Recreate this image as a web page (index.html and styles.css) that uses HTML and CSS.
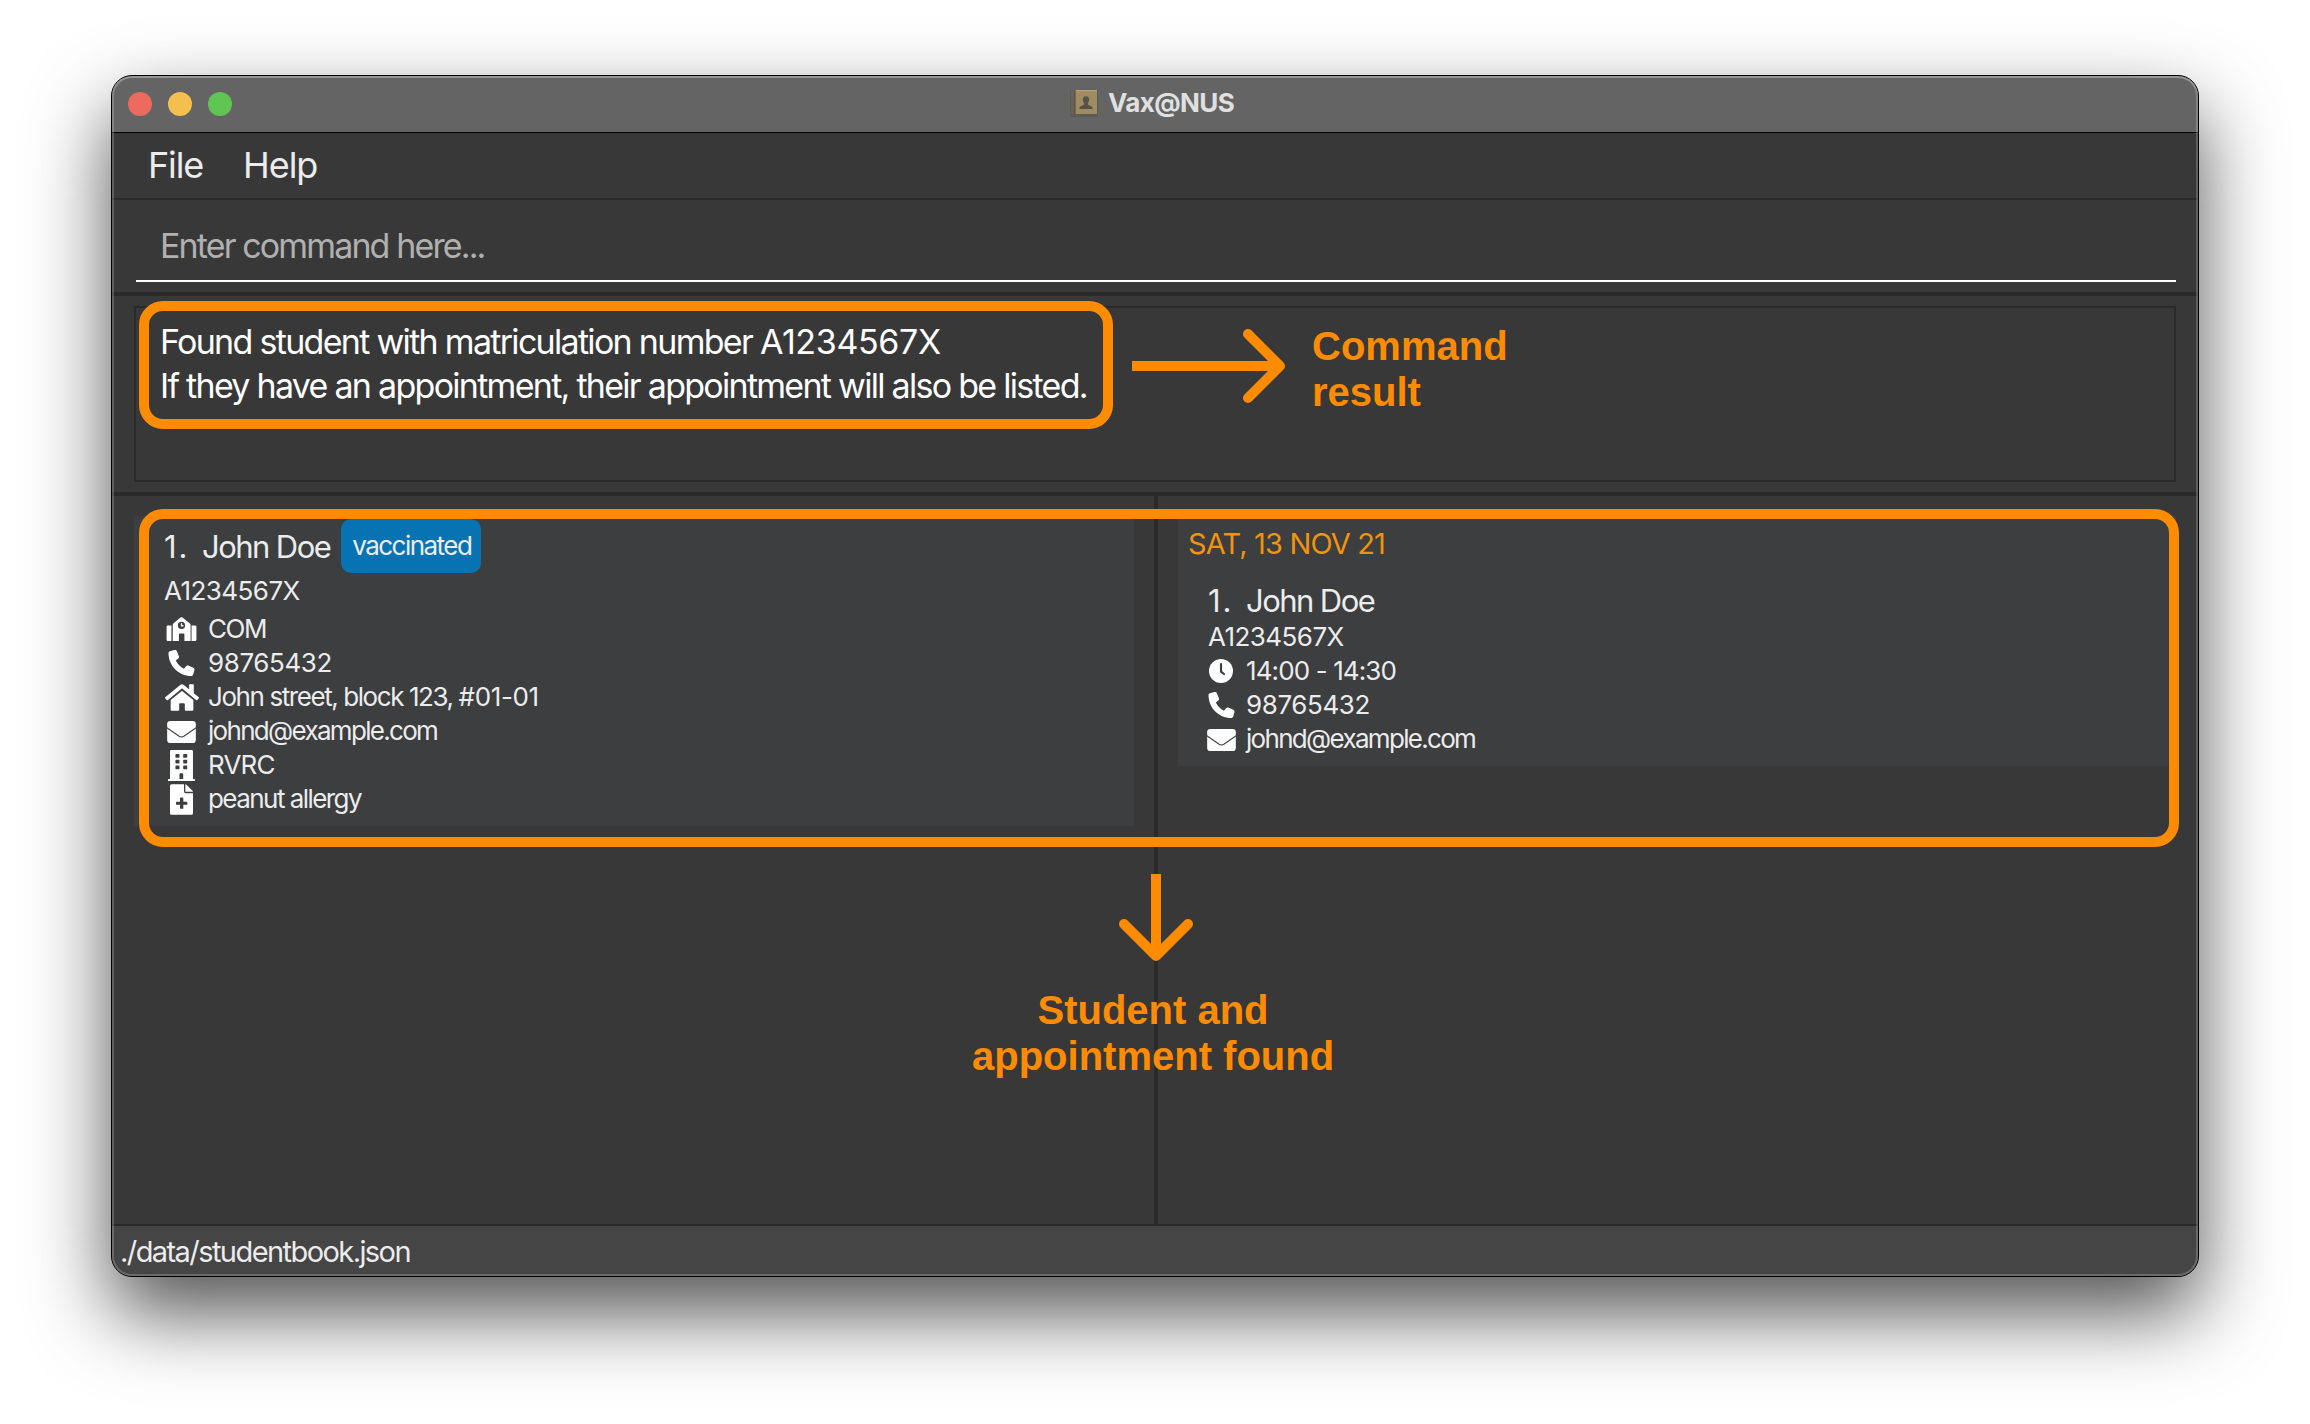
FILE: index.html
```html
<!DOCTYPE html>
<html lang="en">
<head>
<meta charset="utf-8">
<title>Vax@NUS</title>
<link rel="stylesheet" href="styles.css">
</head>
<body>
<svg class="sprite" aria-hidden="true">
  <symbol id="i-phone" viewBox="0 0 512 512"><path d="M164.900 24.600c-7.700-18.600-28-28.500-47.400-23.200l-88 24C12.100 30.200 0 46 0 64C0 311.400 200.600 512 448 512c18 0 33.800-12.100 38.600-29.500l24-88c5.300-19.400-4.600-39.700-23.200-47.400l-96-40c-16.300-6.800-35.200-2.100-46.300 11.600L304.700 368C234.300 334.700 177.300 277.700 144 207.300L193.300 167c13.700-11.200 18.400-30 11.600-46.300l-40-96z"/></symbol>
  <symbol id="i-home" viewBox="0 32 576 448"><path d="M280.370 148.260L96 300.110V464a16 16 0 0 0 16 16l112.060-.29a16 16 0 0 0 15.920-16V368a16 16 0 0 1 16-16h64a16 16 0 0 1 16 16v95.640a16 16 0 0 0 16 16.050L464 480a16 16 0 0 0 16-16V300L295.670 148.260a12.190 12.190 0 0 0-15.300 0zM571.600 251.470L488 182.560V44.050a12 12 0 0 0-12-12h-56a12 12 0 0 0-12 12v72.610L318.470 43a48 48 0 0 0-61 0L4.340 251.470a12 12 0 0 0-1.600 16.900l25.500 31A12 12 0 0 0 45.150 301l235.220-193.740a12.190 12.190 0 0 1 15.300 0L530.900 301a12 12 0 0 0 16.900-1.600l25.500-31a12 12 0 0 0-1.700-16.930z"/></symbol>
  <symbol id="i-mail" viewBox="0 0 86 66"><rect width="86" height="66" rx="10"/><path class="cut-line" d="M-1 20L36 46q7 4 14 0L87 20"/></symbol>
  <symbol id="i-school" viewBox="0 0 92 74"><path fill-rule="evenodd" d="M19 74V24q0-3 2.500-5L43 1.500q3-2 6 0L71 19q3 2 3 5V74H55V54q0-3-3-3H41q-3 0-3 3V74z"/><path d="M4 26H15V74H4q-4 0-4-4V30q0-4 4-4zM77 26H88q4 0 4 4V70q0 4-4 4H77z"/><circle class="cut" cx="46" cy="26" r="11"/><path class="hand" d="M46 19.500V27H52"/></symbol>
  <symbol id="i-building" viewBox="0 0 80 92"><path fill-rule="evenodd" d="M9 0H70q4 0 4 4V86H78q2 0 2 2V92H0V88q0-2 2-2H6V4q0-4 3-4zM24 12h8q2 0 2 2v7q0 2-2 2h-8q-2 0-2-2v-7q0-2 2-2zM47 12h8q2 0 2 2v7q0 2-2 2h-8q-2 0-2-2v-7q0-2 2-2zM24 29h8q2 0 2 2v7q0 2-2 2h-8q-2 0-2-2v-7q0-2 2-2zM47 29h8q2 0 2 2v7q0 2-2 2h-8q-2 0-2-2v-7q0-2 2-2zM24 46h8q2 0 2 2v7q0 2-2 2h-8q-2 0-2-2v-7q0-2 2-2zM47 46h8q2 0 2 2v7q0 2-2 2h-8q-2 0-2-2v-7q0-2 2-2zM36 69h7q2 0 2 2V86H34V71q0-2 2-2z"/></symbol>
  <symbol id="i-file" viewBox="0 0 69 92"><path fill-rule="evenodd" d="M5 0H42V22q0 5 5 5H69V87q0 5-5 5H5q-5 0-5-5V5q0-5 5-5zM30 42q0-2 2-2h6q2 0 2 2V53H50q2 0 2 2v5q0 2-2 2H40V72q0 2-2 2H32q-2 0-2-2V62H20q-2 0-2-2V55q0-2 2-2H30z"/><path d="M46 0q2 0 3.500 1.500L67.500 19.500Q69 21 69 23H46z"/></symbol>
  <symbol id="i-clock" viewBox="0 0 72 72"><circle cx="36" cy="36" r="36"/><path class="cut-hand" d="M36 15V38L45 45"/></symbol>
</svg>

<main class="window">
  <header class="titlebar">
    <div class="lights"><i class="light red"></i><i class="light yellow"></i><i class="light green"></i></div>
    <div class="caption">
      <svg class="book" viewBox="0 0 28 28"><rect x="0" y="1" width="28" height="27" rx="1.500" fill="#5c5a55"/><rect x="1" y="1" width="26" height="24.500" rx="1" fill="#6d6157"/><rect x="5.500" y="1" width="21.500" height="24" fill="#a08c61"/><rect x="5.500" y="1" width="21.500" height="1.200" fill="#b3a27e"/><path d="M4.800 1V25.500" stroke="#565049" stroke-width="1"/><path d="M16 7.300c2 0 3.200 1.400 3.200 3.400 0 1.500-.7 2.800-1.500 3.500v1.300c1.500 1 5 1.300 5 4.500H9.300c0-3.200 3.500-3.500 5-4.500v-1.300c-.8-.7-1.500-2-1.500-3.500 0-2 1.200-3.400 3.200-3.400z" fill="#565149"/></svg>
      <span>Vax@NUS</span>
    </div>
  </header>

  <nav class="menubar"><span class="m-file">File</span><span class="m-help">Help</span></nav>

  <section class="command"><div class="field">Enter command here...</div></section>

  <section class="result">
    <div class="result-box">
      <p class="found">Found student with matriculation number <span class="digits">A1234567X</span></p>
      <p class="listed">If they have an appointment, their appointment will also be listed.</p>
    </div>
  </section>

  <section class="panels">
    <div class="pane students">
      <article class="card">
        <div class="name-row"><span class="num">1.</span><span class="name">John Doe</span><span class="tag">vaccinated</span></div>
        <p class="matric">A1234567X</p>
        <ul class="details">
          <li><span class="ico"><svg class="school"><use href="#i-school"/></svg></span><span class="t-com">COM</span></li>
          <li><span class="ico"><svg class="phone"><use href="#i-phone"/></svg></span><span class="t-num">98765432</span></li>
          <li><span class="ico"><svg class="home"><use href="#i-home"/></svg></span><span class="t-addr">John street, block 123, <span class="digits">#01-01</span></span></li>
          <li><span class="ico"><svg class="mail"><use href="#i-mail"/></svg></span><span class="t-mail">johnd@example.com</span></li>
          <li><span class="ico"><svg class="building"><use href="#i-building"/></svg></span><span class="t-hall">RVRC</span></li>
          <li><span class="ico"><svg class="file"><use href="#i-file"/></svg></span><span class="t-note">peanut allergy</span></li>
        </ul>
      </article>
    </div>
    <div class="pane appointments">
      <article class="card">
        <h2 class="date">SAT, 13 NOV 21</h2>
        <div class="slot">
          <div class="name-row"><span class="num">1.</span><span class="name">John Doe</span></div>
          <p class="matric">A1234567X</p>
          <ul class="details">
            <li><span class="ico"><svg class="clock"><use href="#i-clock"/></svg></span><span class="t-time">14:00 - 14:30</span></li>
            <li><span class="ico"><svg class="phone"><use href="#i-phone"/></svg></span><span class="t-num">98765432</span></li>
            <li><span class="ico"><svg class="mail"><use href="#i-mail"/></svg></span><span class="t-mail">johnd@example.com</span></li>
          </ul>
        </div>
      </article>
    </div>
  </section>

  <footer class="status"><span>./data/studentbook.json</span></footer>
</main>

<div class="mark mark-result"></div>
<div class="mark mark-found"></div>
<svg class="arrow arrow-right" viewBox="0 0 160 80"><path class="shaft" d="M2 40H150"/><path class="head" d="M118 8L150 40L118 72"/></svg>
<svg class="arrow arrow-down" viewBox="0 0 80 92"><path class="shaft" d="M40 2V84"/><path class="head" d="M8 52L40 84L72 52"/></svg>
<div class="note note-result">Command<br>result</div>
<div class="note note-found">Student and<br>appointment found</div>
</body>
</html>
```
FILE: styles.css
```css
* { box-sizing: border-box; margin: 0; padding: 0; }
body {
  position: relative;
  width: 2310px;
  height: 1424px;
  padding: 75px 111px;
  overflow: hidden;
  background: #fff;
  font: 26px/34px Inter, "Noto Sans", sans-serif;
  color: #ececec;
  white-space: nowrap;
}
.sprite { position: absolute; width: 0; height: 0; }
svg { display: block; fill: #fff; }
ul { list-style: none; }

/* window frame */
.window {
  position: relative;
  display: flex;
  flex-direction: column;
  width: 2088px;
  height: 1202px;
  border: 1px solid #000;
  border-radius: 21px;
  background: #383838;
  box-shadow: 0 36px 80px rgba(0, 0, 0, .68);
}
.window::after {
  content: "";
  position: absolute;
  inset: 0;
  border-radius: 20px;
  box-shadow: inset 0 0 0 2px rgba(255, 255, 255, .2), inset 0 2px 0 rgba(255, 255, 255, .15);
  pointer-events: none;
}
.titlebar {
  display: grid;
  grid-template-columns: 1fr auto 1fr;
  align-items: center;
  height: 57px;
  padding: 0 16px;
  border-bottom: 1px solid #000;
  border-radius: 20px 20px 0 0;
  background: #646464;
}
.lights { display: flex; gap: 16px; }
.light { width: 24px; height: 24px; border-radius: 50%; }
.red { background: #ed6a5e; }
.yellow { background: #f5bf4f; }
.green { background: #61c554; }
.caption {
  display: flex;
  align-items: center;
  gap: 10px;
  padding: 0 6px 3px 0;
  font-weight: 700;
  letter-spacing: -.59px;
  color: #e0e0e0;
}
.book { width: 28px; height: 28px; }

.menubar {
  display: flex;
  align-items: center;
  height: 67px;
  padding: 0 0 2px 36px;
  border-bottom: 2px solid #2a2a2a;
  font-size: 36px;
}
.m-file { width: 95px; letter-spacing: -1.16px; }
.m-help { letter-spacing: -1.05px; }

.command { height: 96px; padding: 0 22px 10px 24px; border-bottom: 4px solid #2a2a2a; }
.field {
  height: 82px;
  padding: 11px 0 0 24px;
  border-bottom: 2px solid #fff;
  font-size: 34px;
  line-height: 69px;
  letter-spacing: -1.87px;
  color: #b0b0b0;
}

.result { height: 200px; padding: 10px 22px; border-bottom: 4px solid #2a2a2a; }
.result-box {
  height: 176px;
  padding: 12px 24px;
  border: 2px solid #2a2a2a;
  font-size: 34px;
  line-height: 44px;
  color: #fff;
}
.found { letter-spacing: -1.7px; }
.digits { letter-spacing: -.35px; }
.listed { letter-spacing: -1.72px; }

/* student and appointment lists */
.panels { flex: 1; display: grid; grid-template-columns: 1042px 1fr; }
.pane { padding: 20px 20px 0 22px; }
.appointments { border-left: 4px solid #2a2a2a; padding: 20px 22px 0 20px; }
.card { background: #3c3e3f; }
.students .card { height: 310px; padding: 3px 0 0 30px; }
.appointments .card { height: 250px; padding: 11px 0 0 10px; }

.name-row { display: flex; align-items: center; font-size: 31px; }
.students .name-row { height: 54px; line-height: 36px; }
.students .num, .students .name { padding-top: 2px; }
.appointments .name-row { height: 37px; }
.num { width: 38px; letter-spacing: 1.8px; }
.name { letter-spacing: -1.56px; }
.tag {
  width: 140px;
  height: 54px;
  margin-left: 11px;
  padding-left: 11px;
  border-radius: 10px;
  background: #0873b3;
  font-size: 26px;
  line-height: 53px;
  letter-spacing: -1.53px;
}
.matric { letter-spacing: -.55px; }
.students .matric { height: 39px; line-height: 36px; }
.appointments .matric { height: 35px; line-height: 36px; }
.details li { display: flex; align-items: center; height: 34px; }
.students .details li { gap: 9px; }
.ico { display: flex; justify-content: center; align-items: center; width: 35px; height: 34px; }
.appointments .ico { width: 32px; margin-left: -3px; margin-right: 9px; }

.school { width: 31px; height: 24px; }
.phone { width: 27px; height: 26px; }
.home { width: 34px; height: 27px; }
.mail { width: 29px; height: 22px; margin-top: 1px; }
.building { width: 27px; height: 31px; }
.file { width: 23px; height: 31px; }
.clock { width: 24px; height: 24px; }
.cut { fill: #3c3e3f; }
.cut-line { fill: none; stroke: #3c3e3f; stroke-width: 3.500; }
.cut-hand { fill: none; stroke: #3c3e3f; stroke-width: 6.500; stroke-linecap: round; }
.hand { fill: none; stroke: #fff; stroke-width: 4; }

.t-com { letter-spacing: -1.44px; }
.t-num { letter-spacing: -.4px; }
.t-addr { letter-spacing: -1.42px; }
.t-mail { letter-spacing: -1.69px; }
.t-hall { letter-spacing: -.82px; }
.t-note { letter-spacing: -1.55px; }
.t-time { letter-spacing: -.89px; }

.date { font-size: 29px; font-weight: 400; letter-spacing: -.86px; color: #f1930c; }
.slot { padding: 21px 0 0 20px; }

.status {
  height: 52px;
  padding-left: 8px;
  border-top: 2px solid #2a2a2a;
  border-radius: 0 0 20px 20px;
  background: #454545;
  font-size: 29px;
  line-height: 52px;
  letter-spacing: -1.57px;
}

/* callouts drawn over the window */
.mark { position: absolute; border: 10px solid #ff8c00; border-radius: 24px; }
.mark-result { left: 139px; top: 301px; width: 974px; height: 128px; }
.mark-found { left: 139px; top: 509px; width: 2040px; height: 338px; }
.arrow { position: absolute; fill: none; stroke: #ff8c00; stroke-width: 10; }
.head { stroke-linecap: round; stroke-linejoin: round; }
.arrow-right { left: 1130px; top: 326px; width: 160px; height: 80px; }
.arrow-down { left: 1116px; top: 872px; width: 80px; height: 92px; }
.note {
  position: absolute;
  font: 700 40px/46px "Liberation Sans", Arial, sans-serif;
  color: #ff8c00;
}
.note-result { left: 1312px; top: 323px; }
.note-found { left: 972px; top: 987px; width: 362px; text-align: center; }
```
